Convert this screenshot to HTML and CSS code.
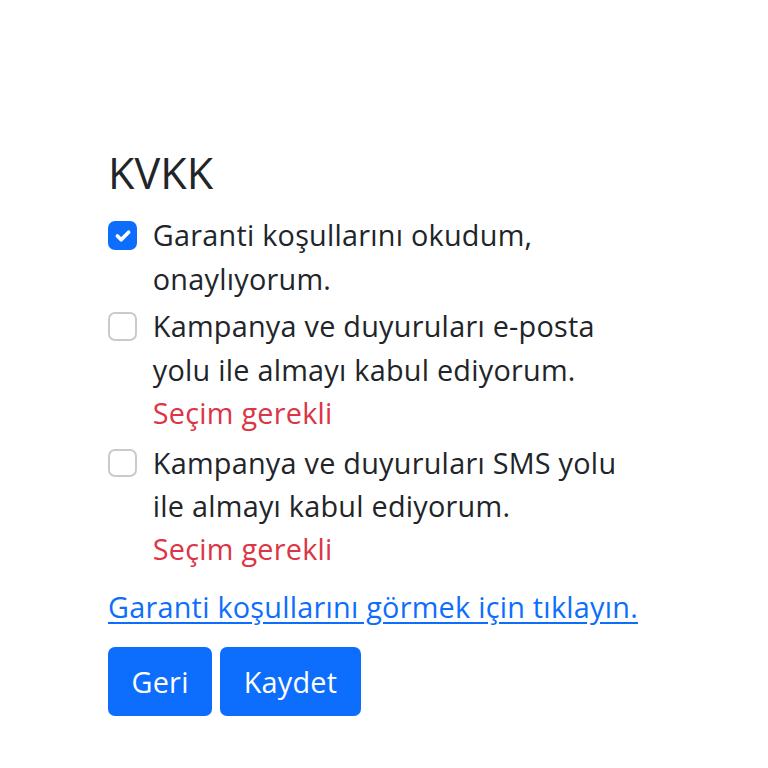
FILE: index.html
```html
<!DOCTYPE html>
<html lang="tr">
<head>
<meta charset="utf-8">
<title>KVKK</title>
<link rel="stylesheet" href="styles.css">
</head>
<body>
<main class="page">
  <h4 class="title">KVKK</h4>
  <div class="check">
    <span class="box box-checked"><svg viewBox="0 0 20 20" width="28" height="28"><path d="M6 10l3 3l6-6" fill="none" stroke="#fff" stroke-width="3" stroke-linecap="round" stroke-linejoin="round"/></svg></span>
    <div class="check-body">
      <div class="label">Garanti koşullarını okudum,<br>onaylıyorum.</div>
    </div>
  </div>
  <div class="check">
    <span class="box"></span>
    <div class="check-body">
      <div class="label">Kampanya ve duyuruları e-posta<br>yolu ile almayı kabul ediyorum.</div>
      <div class="feedback">Seçim gerekli</div>
    </div>
  </div>
  <div class="check">
    <span class="box"></span>
    <div class="check-body">
      <div class="label">Kampanya ve duyuruları SMS yolu<br>ile almayı kabul ediyorum.</div>
      <div class="feedback">Seçim gerekli</div>
    </div>
  </div>
  <a class="link" href="#">Garanti koşullarını görmek için tıklayın.</a>
  <div class="actions">
    <button class="btn" type="button">Geri</button>
    <button class="btn" type="button">Kaydet</button>
  </div>
</main>
</body>
</html>
```

FILE: styles.css
```css
* { box-sizing: border-box; }
html, body { margin: 0; padding: 0; background: #fff; }
body {
  font-family: "Open Sans", Roboto, sans-serif;
  font-size: 28.8px;
  line-height: 43.2px;
  letter-spacing: 0.25px;
  color: #212529;
}
.page {
  padding: 147px 108px 0 108px;
  display: flex;
  flex-direction: column;
  align-items: flex-start;
}
.title {
  font-size: 43.2px;
  font-weight: 400;
  line-height: 52px;
  letter-spacing: 0;
  margin: 0 0 14.4px 0;
}
.check {
  display: flex;
  gap: 16px;
  margin-bottom: 4.6px;
}
.box {
  flex: none;
  width: 28.8px;
  height: 28.8px;
  margin-top: 8px;
  border: 2px solid #c8cacc;
  border-radius: 7px;
  background: #fff;
  display: flex;
  align-items: center;
  justify-content: center;
}
.box-checked {
  background: #0d6efd;
  border-color: #0d6efd;
}
.feedback {
  color: #dc3545;
  margin-bottom: 2px;
}
.link {
  color: #0d6efd;
  text-decoration: underline;
  text-underline-offset: 4px;
  margin-top: 8px;
  margin-bottom: 19px;
}
.actions {
  display: flex;
  gap: 8px;
}
.btn {
  font: inherit;
  letter-spacing: inherit;
  color: #fff;
  background: #0d6efd;
  border: 0;
  border-radius: 7px;
  padding: 13px 23.5px;
  line-height: 43.2px;
}
```
